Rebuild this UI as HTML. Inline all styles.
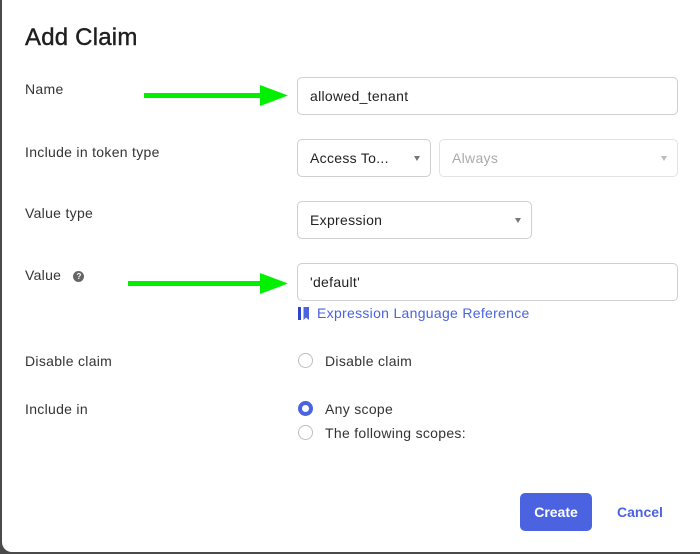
<!DOCTYPE html>
<html><head><style>
*{box-sizing:border-box;margin:0;padding:0}
body{width:700px;height:554px;background:#4a4a4a;font-family:"Liberation Sans",sans-serif;position:relative;overflow:hidden;color:#222}
.modal{position:absolute;left:2px;top:-10px;width:708px;height:562px;background:#fff;border-radius:10px}
.a{position:absolute}
h1{position:absolute;left:25px;top:24px;font-size:24px;font-weight:normal;color:#1f1f1f;-webkit-text-stroke:0.4px #1f1f1f;letter-spacing:0.2px}
.lbl{position:absolute;left:25px;font-size:14px;color:#333;letter-spacing:0.3px}
.inp{position:absolute;border:1px solid #cfcfcf;border-radius:5px;background:#fff;font-size:14px;color:#222;padding-left:12px;display:flex;align-items:center;letter-spacing:0.3px}
.car{position:absolute;right:10px;top:50%;margin-top:-2px;width:0;height:0;border-left:3.5px solid transparent;border-right:3.5px solid transparent;border-top:5px solid #777}
.radio{position:absolute;width:15px;height:15px;border-radius:50%;border:1.5px solid #bdbdbd}
.txt{position:absolute;font-size:14px;color:#333;letter-spacing:0.3px}
</style></head><body>
<div class="modal"></div>
<h1>Add Claim</h1>
<div class="lbl" style="top:81px">Name</div>
<div class="lbl" style="top:144px">Include in token type</div>
<div class="lbl" style="top:205px">Value type</div>
<div class="lbl" style="top:267px">Value <span style="display:inline-block;width:11px;height:11px;border-radius:50%;background:#666;color:#fff;font-size:8px;font-weight:bold;text-align:center;line-height:11px;vertical-align:1px;margin-left:8px;letter-spacing:0">?</span></div>
<div class="lbl" style="top:353px">Disable claim</div>
<div class="lbl" style="top:401px">Include in</div>

<svg class="a" style="left:140px;top:82px" width="150" height="28"><rect x="4" y="11" width="120" height="5" fill="#00f000"/><polygon points="120,3 148,13.5 120,24" fill="#00f000"/></svg>
<svg class="a" style="left:124px;top:270px" width="166" height="28"><rect x="4" y="11" width="136" height="5" fill="#00f000"/><polygon points="136,3 164,13.5 136,24" fill="#00f000"/></svg>

<div class="inp" style="left:297px;top:77px;width:381px;height:38px">allowed_tenant</div>
<div class="inp" style="left:297px;top:139px;width:134px;height:38px">Access To...<span class="car"></span></div>
<div class="inp" style="left:439px;top:139px;width:239px;height:38px;color:#aaa;border-color:#e3e3e3">Always<span class="car" style="border-top-color:#bbb"></span></div>
<div class="inp" style="left:297px;top:201px;width:235px;height:38px">Expression<span class="car"></span></div>
<div class="inp" style="left:297px;top:263px;width:381px;height:38px">'default'</div>
<svg class="a" style="left:298px;top:307px" width="12" height="13"><path d="M0 0H11V13L8 10.5L5.5 13V0Z" fill="#4b63e0"/><rect x="0" y="0" width="3" height="13" fill="#2e45c9"/></svg>
<div class="txt" style="left:317px;top:305px;color:#4b63e0">Expression Language Reference</div>

<div class="radio" style="left:298px;top:353px"></div>
<div class="txt" style="left:325px;top:353px">Disable claim</div>
<div class="radio" style="left:298px;top:401px;border:4px solid #4b63e0"></div>
<div class="txt" style="left:325px;top:401px">Any scope</div>
<div class="radio" style="left:298px;top:425px"></div>
<div class="txt" style="left:325px;top:425px">The following scopes:</div>

<div class="a" style="left:520px;top:493px;width:72px;height:38px;background:#4b63e0;border-radius:5px;color:#fff;font-size:14px;font-weight:bold;display:flex;align-items:center;justify-content:center">Create</div>
<div class="a" style="left:617px;top:504px;font-size:14px;font-weight:bold;color:#4b63e0">Cancel</div>
</body></html>
